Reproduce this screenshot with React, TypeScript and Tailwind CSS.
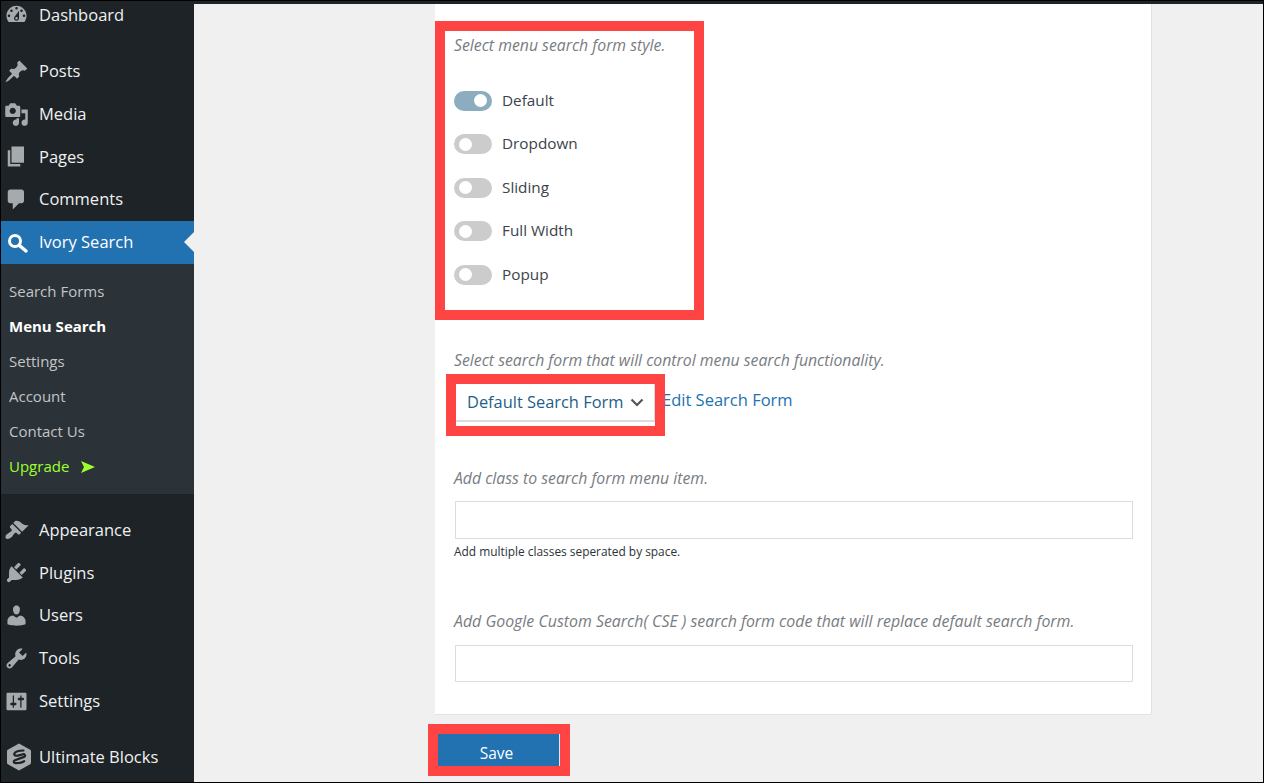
const iconPaths = {
  dashboard: "M3.76 16h12.48c1.1-1.37 1.76-3.11 1.76-5 0-4.42-3.58-8-8-8s-8 3.58-8 8c0 1.89.66 3.63 1.76 5zM10 4c.55 0 1 .45 1 1s-.45 1-1 1-1-.45-1-1 .45-1 1-1zM6 6c.55 0 1 .45 1 1s-.45 1-1 1-1-.45-1-1 .45-1 1-1zm8 0c.55 0 1 .45 1 1s-.45 1-1 1-1-.45-1-1 .45-1 1-1zm-5.37 5.55L12 7v6c0 1.1-.9 2-2 2s-2-.9-2-2c0-.57.24-1.08.63-1.45zM4 10c.55 0 1 .45 1 1s-.45 1-1 1-1-.45-1-1 .45-1 1-1zm12 0c.55 0 1 .45 1 1s-.45 1-1 1-1-.45-1-1 .45-1 1-1zm-5 3c0-.55-.45-1-1-1s-1 .45-1 1 .45 1 1 1 1-.45 1-1z",
  posts: "M10.44 3.02l1.82-1.82 6.36 6.35-1.83 1.82c-1.05-.68-2.48-.57-3.41.36l-.75.75c-.92.93-1.04 2.35-.35 3.41l-1.83 1.82-2.41-2.41-2.8 2.79c-.42.42-3.38 2.71-3.8 2.29s1.86-3.39 2.28-3.81l2.79-2.79L4.1 9.36l1.83-1.82c1.05.69 2.48.57 3.4-.36l.75-.75c.93-.92 1.05-2.35.36-3.41z",
  media: "M13 11V4c0-.55-.45-1-1-1h-1.67L9 1H5L3.67 3H2c-.55 0-1 .45-1 1v7c0 .55.45 1 1 1h10c.55 0 1-.45 1-1zM7 4.5c1.38 0 2.5 1.12 2.5 2.5S8.38 9.5 7 9.5 4.5 8.38 4.5 7 5.62 4.5 7 4.5zM14 6h5v10.5c0 1.38-1.12 2.5-2.5 2.5S14 17.88 14 16.5s1.12-2.5 2.5-2.5c.17 0 .34.02.5.05V9h-3V6zm-4 8.05V13h2v3.5c0 1.38-1.12 2.5-2.5 2.5S7 17.88 7 16.5 8.12 14 9.5 14c.17 0 .34.02.5.05z",
  pages: "M6 15V2h10v13H6zm-1 1h8v2H3V5h2v11z",
  comments: "M5 2h9c1.1 0 2 .9 2 2v7c0 1.1-.9 2-2 2h-2l-5 5v-5H5c-1.1 0-2-.9-2-2V4c0-1.1.9-2 2-2z",
  appearance: "M14.48 11.06L7.41 3.99l1.5-1.5c.5-.56 2.3-.47 3.51.32 1.21.8 1.43 1.28 2.91 2.1 1.18.64 2.45 1.26 4.45.85zm-.71.71L6.7 4.7 4.93 6.47c-.39.39-.39 1.02 0 1.41l1.06 1.06c.39.39.39 1.03 0 1.42-.6.6-1.43 1.11-2.21 1.69-.35.26-.7.53-1.01.84C1.43 13.23.75 15.6 1.58 16.43c.83.83 3.2.15 4.55-1.2.31-.31.58-.66.84-1.01.58-.78 1.09-1.61 1.69-2.21.39-.39 1.03-.39 1.42 0l1.06 1.06c.39.39 1.02.39 1.41 0z",
  plugins: "M13.11 4.36L9.87 7.6 8 5.73l3.24-3.24c.35-.34 1.05-.2 1.56.32.52.51.66 1.21.31 1.55zm-8 1.77l.91-1.12 9.01 9.01-1.19.84c-.71.71-2.63 1.16-3.82 1.16H6.14L4.9 17.26c-.59.59-1.54.59-2.12 0-.59-.58-.59-1.53 0-2.12l1.24-1.24v-3.88c0-1.13.4-3.19 1.09-3.89zm7.26 3.97l3.24-3.24c.34-.35 1.04-.21 1.55.31.52.51.66 1.21.31 1.55l-3.24 3.25z",
  users: "M10 9.25c-2.27 0-2.73-3.44-2.73-3.44C7 4.02 7.82 2 9.97 2c2.16 0 2.98 2.02 2.71 3.81 0 0-.41 3.44-2.68 3.44zm0 2.57L12.72 10c2.39 0 4.52 2.33 4.52 4.53v2.49s-3.65 1.13-7.24 1.13c-3.65 0-7.24-1.13-7.24-1.13v-2.49c0-2.25 1.94-4.48 4.47-4.48z",
  tools: "M16.68 9.77c-1.34 1.34-3.3 1.67-4.95.99l-5.41 6.52c-.99.99-2.59.99-3.58 0s-.99-2.59 0-3.57l6.52-5.42c-.68-1.65-.35-3.61.99-4.95 1.28-1.28 3.12-1.62 4.72-1.06l-2.89 2.89 2.82 2.82 2.86-2.87c.53 1.58.18 3.39-1.08 4.65zM3.81 16.21c.4.39 1.04.39 1.43 0 .4-.4.4-1.04 0-1.43-.39-.4-1.03-.4-1.43 0-.39.39-.39 1.03 0 1.43z",
  settings: "M18 16V4c0-.55-.45-1-1-1H3c-.55 0-1 .45-1 1v12c0 .55.45 1 1 1h14c.55 0 1-.45 1-1zM8 11h1c.55 0 1 .45 1 1s-.45 1-1 1H8v1.5c0 .28-.22.5-.5.5s-.5-.22-.5-.5V13H6c-.55 0-1-.45-1-1s.45-1 1-1h1V5.5c0-.28.22-.5.5-.5s.5.22.5.5V11zm5-2h-1c-.55 0-1-.45-1-1s.45-1 1-1h1V5.5c0-.28.22-.5.5-.5s.5.22.5.5V7h1c.55 0 1 .45 1 1s-.45 1-1 1h-1v5.5c0 .28-.22.5-.5.5s-.5-.22-.5-.5V9z",
}

type IconName = keyof typeof iconPaths

function MenuIcon({ name }: { name: IconName }) {
  return (
    <svg viewBox="0 0 20 20" className="w-[25px] h-[25px] shrink-0 fill-[#a7aaad]">
      <path d={iconPaths[name]} />
    </svg>
  )
}

function MenuRow({ name, label }: { name: IconName; label: string }) {
  return (
    <div className="h-[42.8px] flex items-center pl-[3px] gap-[10px] text-[16.5px] text-[#f0f0f1]">
      <MenuIcon name={name} />
      <span>{label}</span>
    </div>
  )
}

function SubRow({ label, active }: { label: string; active?: boolean }) {
  return (
    <div className={`h-[35.2px] flex items-center pl-2 text-[15px] ${active ? "font-bold text-white" : "text-[#c3c4c7]"}`}>
      {label}
    </div>
  )
}

function Toggle({ on, label }: { on?: boolean; label: string }) {
  return (
    <div className="h-[43.5px] flex items-center gap-[10px]">
      <div className={`w-[38px] h-5 rounded-full flex items-center ${on ? "bg-[#8cacbf] justify-end pr-[5px]" : "bg-[#cccccc] pl-[5px]"}`}>
        <div className="w-[13px] h-[13px] rounded-full bg-white" />
      </div>
      <span className="-mt-[1px] text-[15.3px] text-[#3c434a]">{label}</span>
    </div>
  )
}

export default function App() {
  return (
    <div className="w-[1264px] h-[783px] overflow-hidden flex flex-col border border-black bg-[#f0f0f0] font-['Open_Sans',sans-serif]">
      <div className="h-[3px] shrink-0 bg-[#1d2327]" />
      <div className="flex flex-1 min-h-0">
        {/* sidebar */}
        <aside className="w-[193px] shrink-0 bg-[#1d2327] overflow-hidden">
          <div className="h-[21px] flex items-center pl-[3px] gap-[10px] text-[16.5px] leading-[20px] text-[#f0f0f1]">
            <MenuIcon name="dashboard" />
            <span>Dashboard</span>
          </div>
          <div className="h-[25px]" />
          <MenuRow name="posts" label="Posts" />
          <MenuRow name="media" label="Media" />
          <MenuRow name="pages" label="Pages" />
          <MenuRow name="comments" label="Comments" />
          <div className="relative h-[43px] bg-[#2271b1] flex items-center pl-[3px] gap-[10px] text-[16.5px] text-white">
            <svg viewBox="0 0 25 25" className="w-[25px] h-[25px] shrink-0 fill-none stroke-white">
              <circle cx="11" cy="11" r="5.5" strokeWidth="3" />
              <path d="M16 16l6 5" strokeWidth="3.5" strokeLinecap="round" />
            </svg>
            <span>Ivory Search</span>
            <div className="absolute right-0 top-[11px] w-0 h-0 border-y-[10px] border-y-transparent border-r-[10px] border-r-[#f0f0f0]" />
          </div>
          <div className="bg-[#2c3338] h-[230px] pt-[9px]">
            <SubRow label="Search Forms" />
            <SubRow label="Menu Search" active />
            <SubRow label="Settings" />
            <SubRow label="Account" />
            <SubRow label="Contact Us" />
            <div className="h-[35.2px] flex items-center pl-2 gap-[12px] text-[15px] text-[#9dff2e]">
              <span>Upgrade</span>
              <svg viewBox="0 0 14 12" className="w-[14px] h-3 fill-[#9dff2e]">
                <path d="M0 0l14 6-14 6 3-6z" />
              </svg>
            </div>
          </div>
          <div className="h-[14.5px]" />
          <MenuRow name="appearance" label="Appearance" />
          <MenuRow name="plugins" label="Plugins" />
          <MenuRow name="users" label="Users" />
          <MenuRow name="tools" label="Tools" />
          <MenuRow name="settings" label="Settings" />
          <div className="h-[13px]" />
          <div className="h-[42.8px] flex items-center pl-[3px] gap-[7px] text-[16.5px] text-[#f0f0f1]">
            <svg viewBox="0 0 28 28" className="w-[28px] h-[28px] shrink-0 translate-x-[1px]">
              <path d="M14 .5l11.2 6.3a1.6 1.6 0 0 1 .8 1.4v11.6a1.6 1.6 0 0 1-.8 1.4L14 27.5 2.8 21.2a1.6 1.6 0 0 1-.8-1.4V8.2a1.6 1.6 0 0 1 .8-1.4z" fill="#a7aaad" />
              <path d="M18.5 7.5C15 7.5 10 8.5 9.3 10.8 8.8 13 12 13 14 12.4l4-1.1c2-.5 2.8 1.7 1 2.6l-9 3.3c-2 .9-1.5 3 .8 3 2.6 0 7.2-1 8.4-2" fill="none" stroke="#1d2327" strokeWidth="2.2" strokeLinecap="round" />
            </svg>
            <span>Ultimate Blocks</span>
          </div>
        </aside>

        {/* main */}
        <main className="flex-1 min-w-0 pl-[241px] pr-[111px] flex flex-col">
          <div className="h-[711px] shrink-0 bg-white border-r border-b border-[#e2e2e2] rounded-br-[3px] pt-[17px] flex flex-col">
            <div className="w-[269px] h-[299px] border-[10px] border-[#ff4444] pl-[9px] pt-[3px]">
              <p className="text-[15.8px] leading-[22px] italic text-[#787c82]">Select menu search form style.</p>
              <div className="mt-[23px]">
                <Toggle on label="Default" />
                <Toggle label="Dropdown" />
                <Toggle label="Sliding" />
                <Toggle label="Full Width" />
                <Toggle label="Popup" />
              </div>
            </div>
            <p className="mt-[29px] pl-[19px] text-[15.8px] leading-[22px] italic text-[#787c82]">
              Select search form that will control menu search functionality.
            </p>
            <div className="mt-[3px] flex items-start">
              <div className="relative z-10 ml-[11px] w-[219px] h-[62px] border-[10px] border-[#ff4444] bg-white">
                <div className="h-[38px] border-b-2 border-r border-[#dcdcde] flex items-center pl-[11px] gap-[7px] text-[16.4px] text-[#1d5f8a]">
                  <span>Default Search Form</span>
                  <svg viewBox="0 0 14 9" className="w-[14px] h-[9px] fill-none stroke-[#50575e]" strokeWidth="2.2">
                    <path d="M1.5 1.5L7 7l5.5-5.5" />
                  </svg>
                </div>
              </div>
              <a className="ml-[-3px] mt-[14px] text-[16.5px] text-[#2271b1]">Edit Search Form</a>
            </div>
            <p className="mt-[31px] pl-[19px] text-[15.8px] leading-[22px] italic text-[#787c82]">Add class to search form menu item.</p>
            <div className="mt-[12px] ml-[20px] w-[678px] h-[38px] border border-[#dcdcde] bg-white" />
            <p className="mt-[4px] pl-[19px] text-[11.9px] text-[#2c3338]">Add multiple classes seperated by space.</p>
            <p className="mt-[49px] pl-[19px] text-[15.9px] leading-[22px] italic text-[#787c82]">
              Add Google Custom Search( CSE ) search form code that will replace default search form.
            </p>
            <div className="mt-[13px] ml-[20px] w-[678px] h-[37px] border border-[#dcdcde] bg-white" />
          </div>
          <div className="mt-[9px] -ml-[7px] w-[142px] h-[52px] border-[10px] border-[#ff4444]">
            <div className="h-full bg-[#2271b1] border-r border-r-[#dbe7f1] flex items-center justify-center text-[15.5px] text-white">
              <span className="pt-[8px] pr-[4px]">Save</span>
            </div>
          </div>
        </main>
      </div>
    </div>
  )
}
